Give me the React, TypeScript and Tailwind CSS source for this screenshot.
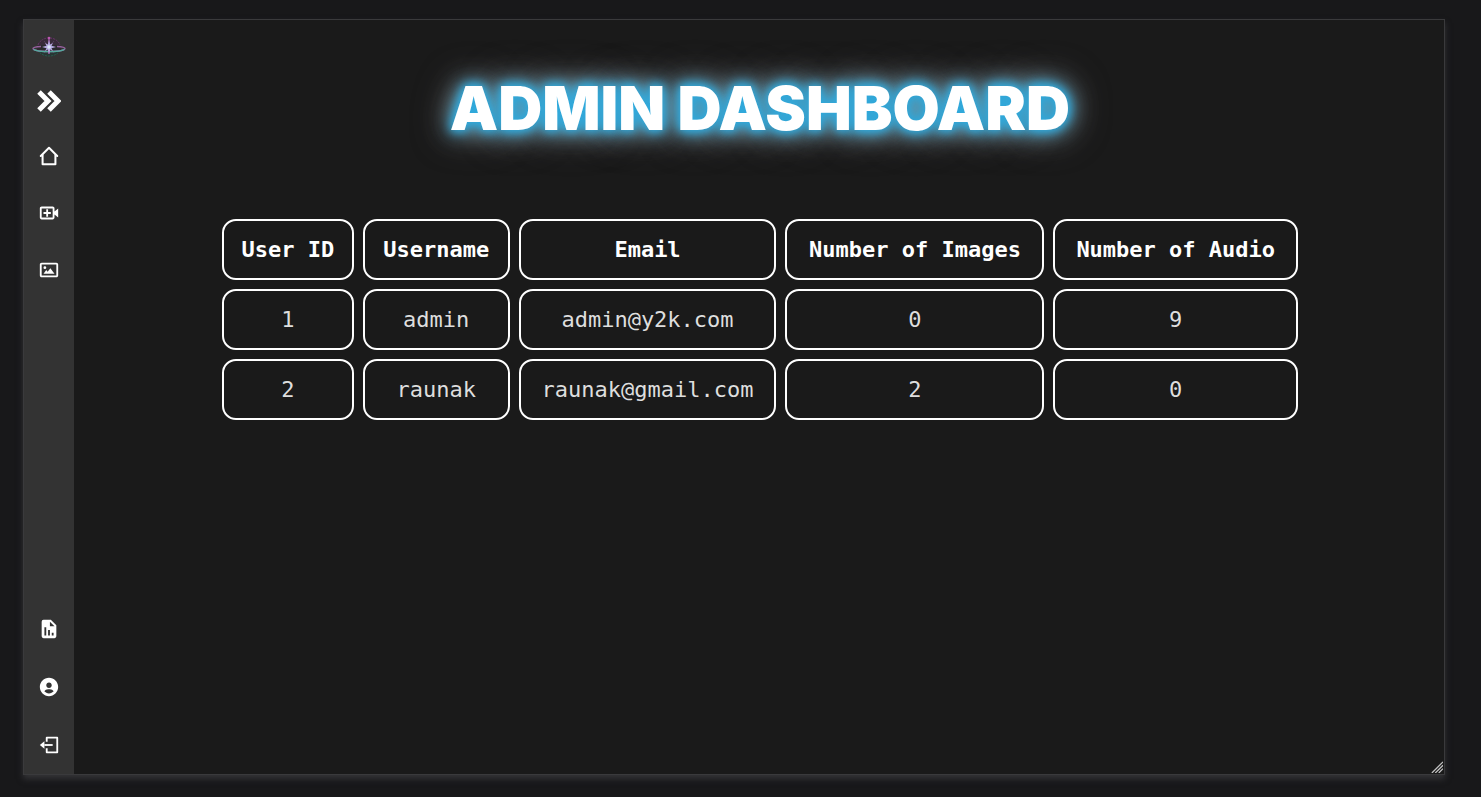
import type { ComponentType } from "react";
import {
  BiImage,
  BiSolidReport,
  BiSolidUserCircle,
  BiVideoPlus,
} from "react-icons/bi";

type IconProps = { size?: number };
type NavItem = { label: string; icon: ComponentType<IconProps> };

function HomeIcon({ size = 22 }: IconProps) {
  return (
    <svg viewBox="0 0 24 24" width={size} height={size} fill="none" stroke="currentColor" strokeWidth="2.200" strokeLinecap="round" strokeLinejoin="round" aria-hidden="true">
      <path d="M3 12 12 3l9 9" />
      <path d="M5 11v10h14V11" />
    </svg>
  );
}

function ExitIcon({ size = 22 }: IconProps) {
  return (
    <svg viewBox="0 0 24 24" width={size} height={size} fill="none" stroke="currentColor" strokeWidth="2" strokeLinejoin="round" aria-hidden="true">
      <path d="M9.500 8.500V4H21v16H9.500v-4.500" />
      <path d="M7 12h9" />
      <path d="M2 12l5-4v8z" fill="currentColor" stroke="none" />
    </svg>
  );
}

const primaryNav: NavItem[] = [
  { label: "Home", icon: HomeIcon },
  { label: "New video", icon: BiVideoPlus },
  { label: "Gallery", icon: BiImage },
];

const secondaryNav: NavItem[] = [
  { label: "Reports", icon: BiSolidReport },
  { label: "Account", icon: BiSolidUserCircle },
  { label: "Log out", icon: ExitIcon },
];

const columns = [
  { title: "User ID", width: "w-[12.7%]" },
  { title: "Username", width: "w-[14.1%]" },
  { title: "Email", width: "w-[24.8%]" },
  { title: "Number of Images", width: "w-[24.9%]" },
  { title: "Number of Audio", width: "w-[23.5%]" },
];

const users = [
  { id: 1, name: "admin", email: "admin@y2k.com", images: 0, audio: 9 },
  { id: 2, name: "raunak", email: "raunak@gmail.com", images: 2, audio: 0 },
];

function Logo() {
  return (
    <svg viewBox="0 0 34 26" className="h-[26px] w-[34px]" fill="none" aria-hidden="true">
      <path d="M6 11a11.500 10 0 0 1 22 0" fill="#382a39" stroke="#6b336d" strokeWidth="1" strokeDasharray="2 1" />
      <path d="M6 16a11.500 8.500 0 0 0 22 0" fill="#283634" stroke="#24604f" strokeWidth="1" strokeDasharray="2 1" />
      <path d="M6 11h22l1 5H5z" fill="#2b292d" />
      <path d="M12 7l10 12M22 7 12 19" stroke="#5d4565" strokeWidth="0.7" />
      <path d="M9 12.500c-5 .3-8 .9-8 2 0 1.800 7 3 16 3s16-1.200 16-3c0-1.100-3-1.700-8-2" stroke="#94609c" strokeWidth="1.400" />
      <path d="M1.500 15.300C4 16.900 10 17.600 17 17.600s13-.7 15.500-2.300" stroke="#52a99c" strokeWidth="1.400" />
      <path d="M17 3v17" stroke="#a85cab" strokeWidth="1.300" />
      <path d="m17 6 1.200 4.500 2.800-1.500-1.500 2.800L24 13l-4.500 1.200L21 17l-2.800-1.500L17 20l-1.200-4.500L13 17l1.500-2.800L10 13l4.500-1.200L13 9l2.800 1.500z" fill="#b5a9df" />
      <circle cx="17" cy="13" r="1.800" fill="#d8e4f5" />
      <circle cx="17" cy="4" r="1.300" fill="#b957ae" />
    </svg>
  );
}

function NavLink({ label, icon: Icon, height }: NavItem & { height: string }) {
  return (
    <li>
      <a href="#" aria-label={label} className={`flex items-center justify-center text-white ${height}`}>
        <Icon size={22} />
      </a>
    </li>
  );
}

function Sidebar() {
  return (
    <nav aria-label="Main" className="flex w-[50px] shrink-0 flex-col bg-[#333333]">
      <a href="#" aria-label="Dashboard" className="flex justify-center pt-3.5">
        <Logo />
      </a>
      <button type="button" aria-label="Expand menu" className="mt-[29px] flex h-6 items-center justify-center text-white">
        <svg viewBox="0 0 24 22" className="h-[22px] w-6" fill="none" stroke="currentColor" strokeWidth="5" aria-hidden="true">
          <path d="m2 2 9 9-9 9M12 2l9 9-9 9" />
        </svg>
      </button>
      <ul className="mt-3.5">
        {primaryNav.map((item) => (
          <NavLink key={item.label} {...item} height="h-[57px]" />
        ))}
      </ul>
      <ul className="mt-auto">
        {secondaryNav.map((item) => (
          <NavLink key={item.label} {...item} height="h-[58px]" />
        ))}
      </ul>
    </nav>
  );
}

function UserTable() {
  const cell = "h-[61px] rounded-[14px] border-2 border-white p-0 text-center";
  return (
    <table className="mx-auto mt-[70px] w-4/5 table-fixed border-separate border-spacing-[9px] font-['DejaVu_Sans_Mono',monospace] text-[22px]">
      <thead>
        <tr>
          {columns.map((column) => (
            <th key={column.title} scope="col" className={`${cell} ${column.width} font-bold`}>
              {column.title}
            </th>
          ))}
        </tr>
      </thead>
      <tbody className="text-[#dedede]">
        {users.map((user) => (
          <tr key={user.id}>
            <td className={cell}>{user.id}</td>
            <td className={cell}>{user.name}</td>
            <td className={cell}>{user.email}</td>
            <td className={cell}>{user.images}</td>
            <td className={cell}>{user.audio}</td>
          </tr>
        ))}
      </tbody>
    </table>
  );
}

function ResizeGrip() {
  return (
    <svg viewBox="0 0 14 14" className="absolute right-px bottom-px h-3 w-3" stroke="#c4c4c4" strokeWidth="1.400" aria-hidden="true">
      <path d="M1 14 14 1M5 14l9-9M9 14l5-5" />
    </svg>
  );
}

export default function App() {
  return (
    <div className="flex h-screen bg-[#18181a] pt-[19px] pl-[23px] text-white">
      <div className="relative flex h-[calc(95vh-1px)] w-[96vw] border border-[#3a3a3c] bg-[#1a1a1a] shadow-[0_4px_6px_#333336]">
        <Sidebar />
        <main className="min-w-0 flex-1 pt-14 pl-0.5">
          <h1 className="text-center font-['Inter',sans-serif] text-[61px] leading-[64px] font-black whitespace-nowrap [text-shadow:0_0_10px_#2fa9dc,0_0_12px_#2fa9dc,0_0_20px_#2fa9dc,0_0_30px_#c8ccce,0_0_40px_#606668]">
            ADMIN DASHBOARD
          </h1>
          <UserTable />
        </main>
        <ResizeGrip />
      </div>
    </div>
  );
}
